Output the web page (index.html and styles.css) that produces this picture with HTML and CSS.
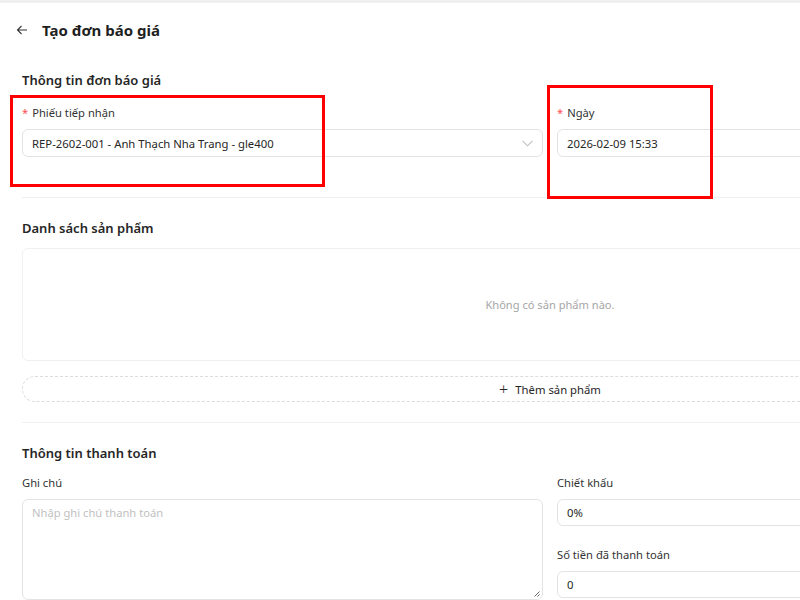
FILE: index.html
```html
<!DOCTYPE html>
<html lang="vi">
<head>
    <meta charset="UTF-8">
    <meta name="viewport" content="width=device-width, initial-scale=1.0">
    <title>Tạo đơn báo giá</title>
    <link rel="stylesheet" href="styles.css">
</head>
<body>
    <div class="topbar"></div>
    <div class="page">
        <div class="header">
            <span class="back">
                <svg width="12" height="12" viewBox="0 0 12 12"><path d="M11 6H1.5M5.5 2L1.5 6l4 4" fill="none" stroke="#333" stroke-width="1.1"/></svg>
            </span>
            <h1 class="page-title">Tạo đơn báo giá</h1>
        </div>

        <div class="section-title first">Thông tin đơn báo giá</div>
        <div class="form-row">
            <div class="form-item">
                <label class="form-label"><span class="req">*</span>Phiếu tiếp nhận</label>
                <div class="input select">
                    <span>REP-2602-001 - Anh Thạch Nha Trang - gle400</span>
                    <svg class="chevron" width="11" height="7" viewBox="0 0 11 7"><path d="M0.5 0.8L5.5 5.8L10.5 0.8" fill="none" stroke="#bfbfbf" stroke-width="1.1"/></svg>
                </div>
            </div>
            <div class="form-item">
                <label class="form-label"><span class="req">*</span>Ngày</label>
                <div class="input">2026-02-09 15:33</div>
            </div>
        </div>
        <div class="divider"></div>

        <div class="section-title">Danh sách sản phẩm</div>
        <div class="empty-box">Không có sản phẩm nào.</div>
        <button class="add-button"><span class="plus">+</span>Thêm sản phẩm</button>
        <div class="divider second"></div>

        <div class="section-title">Thông tin thanh toán</div>
        <div class="form-row">
            <div class="form-item">
                <label class="form-label">Ghi chú</label>
                <div class="textarea">
                    <span class="placeholder">Nhập ghi chú thanh toán</span>
                    <svg class="resize" width="7" height="7" viewBox="0 0 7 7"><path d="M6.5 1.5L1.5 6.5M6.5 4.5L4.5 6.5" stroke="#555" stroke-width="0.9"/></svg>
                </div>
            </div>
            <div class="form-item">
                <label class="form-label">Chiết khấu</label>
                <div class="input short">0%</div>
                <label class="form-label spaced">Số tiền đã thanh toán</label>
                <div class="input short">0</div>
            </div>
        </div>
    </div>

    <div class="mark mark-1"></div>
    <div class="mark mark-2"></div>
</body>
</html>
```

FILE: styles.css
```css
* {
    box-sizing: border-box;
    margin: 0;
    padding: 0;
    font-family: 'Noto Sans', 'Open Sans', sans-serif;
}
body {
    background-color: white;
    color: #262626;
    overflow: hidden;
    width: 800px;
    height: 600px;
    position: relative;
}
.topbar {
    height: 3px;
    background-color: #f0f0f0;
}
.page {
    width: 1100px;
    padding: 0 22px;
}
.header {
    height: 54px;
    display: flex;
    align-items: center;
    margin-left: -6px;
}
.back {
    display: flex;
    width: 12px;
    margin-right: 14px;
}
.page-title {
    font-size: 15px;
    font-weight: 700;
    color: #1f1f1f;
}
.section-title {
    font-size: 13px;
    line-height: 20px;
    font-weight: 600;
    color: #262626;
    margin-top: 20px;
    margin-bottom: 10px;
}
.section-title.first {
    margin-top: 13px;
    margin-bottom: 13px;
}
.form-row {
    display: grid;
    grid-template-columns: 1fr 1fr;
    gap: 14px;
}
.form-label {
    display: block;
    font-size: 11.2px;
    line-height: 20px;
    color: #333;
    margin-bottom: 6px;
}
.form-label.spaced {
    margin-top: 19px;
}
.req {
    color: #ff4d4f;
    margin-right: 4px;
}
.input {
    height: 28px;
    border: 1px solid #e3e3e3;
    border-radius: 6px;
    padding: 0 9px;
    font-size: 11.3px;
    color: #262626;
    display: flex;
    align-items: center;
}
.input.short {
    height: 27px;
}
.select {
    justify-content: space-between;
}
.divider {
    height: 1px;
    background-color: #f0f0f0;
    margin-top: 40px;
}
.divider.second {
    margin-top: 20px;
}
.empty-box {
    height: 113px;
    border: 1px solid #f0f0f0;
    border-radius: 6px;
    display: flex;
    align-items: center;
    justify-content: center;
    font-size: 11.1px;
    color: #a6a6a6;
}
.add-button {
    display: flex;
    align-items: center;
    justify-content: center;
    width: 100%;
    height: 26px;
    margin-top: 15px;
    border: 1px dashed #dcdcdc;
    border-radius: 13px;
    background-color: white;
    font-size: 11.3px;
    color: #262626;
}
.plus {
    font-size: 16px;
    font-weight: 300;
    margin-right: 7px;
    line-height: 1;
}
.textarea {
    height: 101px;
    border: 1px solid #e3e3e3;
    border-radius: 6px;
    padding: 5px 9px;
    font-size: 11.2px;
    position: relative;
}
.placeholder {
    color: #bfbfbf;
}
.resize {
    position: absolute;
    right: 2px;
    bottom: 2px;
}
.mark {
    position: absolute;
    border: 3px solid #f00;
}
.mark-1 {
    left: 10px;
    top: 95px;
    width: 315px;
    height: 92px;
}
.mark-2 {
    left: 547px;
    top: 85px;
    width: 166px;
    height: 114px;
}
```
